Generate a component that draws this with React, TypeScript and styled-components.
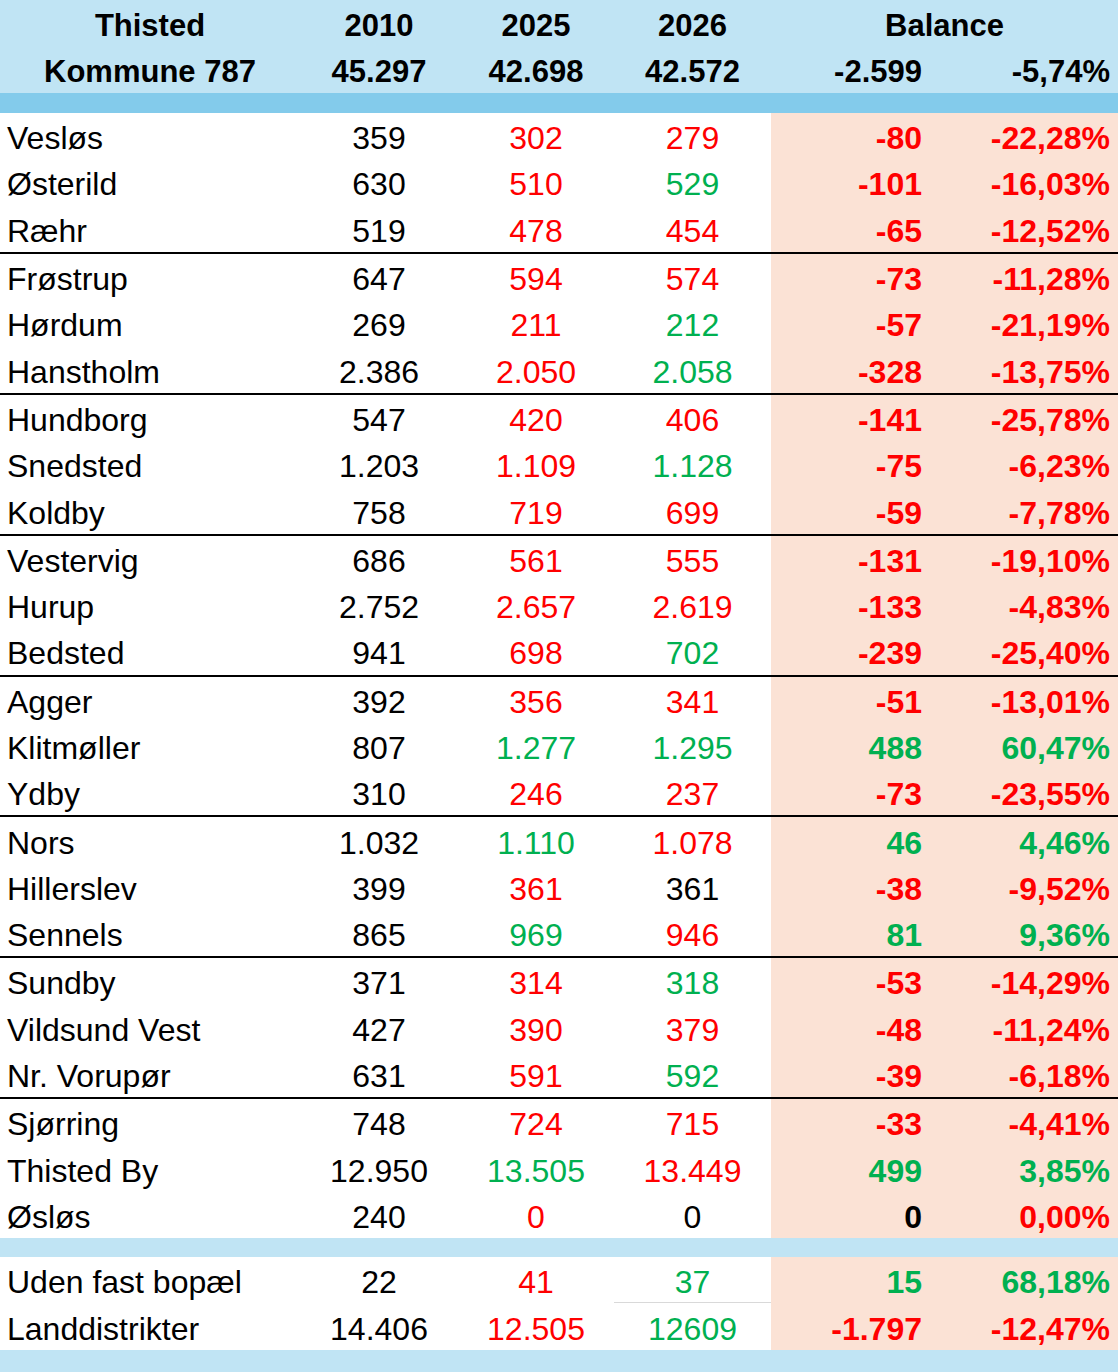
import styled, { createGlobalStyle } from 'styled-components'

type Tone = 'k' | 'r' | 'g'

interface Place {
  name: string
  y2010: string
  y2025: [string, Tone]
  y2026: [string, Tone]
  diff: [string, Tone]
  pct: [string, Tone]
}

const COLS = '300px 158px 156px 157px 159px 188px'

const tone = (t: Tone) => (t === 'r' ? '#ff0000' : t === 'g' ? '#00b050' : '#000000')

const p = (
  name: string,
  y2010: string,
  a: string,
  at: Tone,
  b: string,
  bt: Tone,
  d: string,
  dt: Tone,
  pc: string,
  pt: Tone
): Place => ({ name, y2010, y2025: [a, at], y2026: [b, bt], diff: [d, dt], pct: [pc, pt] })

const groups: Place[][] = [
  [
    p('Vesløs', '359', '302', 'r', '279', 'r', '-80', 'r', '-22,28%', 'r'),
    p('Østerild', '630', '510', 'r', '529', 'g', '-101', 'r', '-16,03%', 'r'),
    p('Ræhr', '519', '478', 'r', '454', 'r', '-65', 'r', '-12,52%', 'r'),
  ],
  [
    p('Frøstrup', '647', '594', 'r', '574', 'r', '-73', 'r', '-11,28%', 'r'),
    p('Hørdum', '269', '211', 'r', '212', 'g', '-57', 'r', '-21,19%', 'r'),
    p('Hanstholm', '2.386', '2.050', 'r', '2.058', 'g', '-328', 'r', '-13,75%', 'r'),
  ],
  [
    p('Hundborg', '547', '420', 'r', '406', 'r', '-141', 'r', '-25,78%', 'r'),
    p('Snedsted', '1.203', '1.109', 'r', '1.128', 'g', '-75', 'r', '-6,23%', 'r'),
    p('Koldby', '758', '719', 'r', '699', 'r', '-59', 'r', '-7,78%', 'r'),
  ],
  [
    p('Vestervig', '686', '561', 'r', '555', 'r', '-131', 'r', '-19,10%', 'r'),
    p('Hurup', '2.752', '2.657', 'r', '2.619', 'r', '-133', 'r', '-4,83%', 'r'),
    p('Bedsted', '941', '698', 'r', '702', 'g', '-239', 'r', '-25,40%', 'r'),
  ],
  [
    p('Agger', '392', '356', 'r', '341', 'r', '-51', 'r', '-13,01%', 'r'),
    p('Klitmøller', '807', '1.277', 'g', '1.295', 'g', '488', 'g', '60,47%', 'g'),
    p('Ydby', '310', '246', 'r', '237', 'r', '-73', 'r', '-23,55%', 'r'),
  ],
  [
    p('Nors', '1.032', '1.110', 'g', '1.078', 'r', '46', 'g', '4,46%', 'g'),
    p('Hillerslev', '399', '361', 'r', '361', 'k', '-38', 'r', '-9,52%', 'r'),
    p('Sennels', '865', '969', 'g', '946', 'r', '81', 'g', '9,36%', 'g'),
  ],
  [
    p('Sundby', '371', '314', 'r', '318', 'g', '-53', 'r', '-14,29%', 'r'),
    p('Vildsund Vest', '427', '390', 'r', '379', 'r', '-48', 'r', '-11,24%', 'r'),
    p('Nr. Vorupør', '631', '591', 'r', '592', 'g', '-39', 'r', '-6,18%', 'r'),
  ],
  [
    p('Sjørring', '748', '724', 'r', '715', 'r', '-33', 'r', '-4,41%', 'r'),
    p('Thisted By', '12.950', '13.505', 'g', '13.449', 'r', '499', 'g', '3,85%', 'g'),
    p('Øsløs', '240', '0', 'r', '0', 'k', '0', 'k', '0,00%', 'r'),
  ],
]

const totals: Place[] = [
  p('Uden fast bopæl', '22', '41', 'r', '37', 'g', '15', 'g', '68,18%', 'g'),
  p('Landdistrikter', '14.406', '12.505', 'r', '12609', 'g', '-1.797', 'r', '-12,47%', 'r'),
]

const GlobalStyle = createGlobalStyle`
  html, body {
    margin: 0;
    padding: 0;
    background: #ffffff;
  }
  body {
    font-family: "Liberation Sans", Arial, sans-serif;
  }
`

const Sheet = styled.div`
  width: 1118px;
  display: flex;
  flex-direction: column;
`

const HeadRow = styled.div`
  display: grid;
  grid-template-columns: ${COLS};
  height: 46.5px;
  background: #c0e4f4;
  font-size: 31px;
  font-weight: 700;
  color: #000;
`

const HeadCell = styled.div<{ $align?: 'center' | 'right'; $span?: number }>`
  display: flex;
  align-items: center;
  justify-content: ${props => (props.$align === 'right' ? 'flex-end' : 'center')};
  padding-top: 5px;
  padding-right: ${props => (props.$align === 'right' ? '8px' : '0')};
  grid-column: span ${props => props.$span ?? 1};
`

const Band = styled.div<{ $dark?: boolean; $h: number }>`
  height: ${props => props.$h}px;
  background: ${props => (props.$dark ? '#83cbeb' : '#c0e4f4')};
`

const Row = styled.div<{ $last?: boolean }>`
  display: grid;
  grid-template-columns: ${COLS};
  height: 46.3px;
  border-bottom: ${props => (props.$last ? '2px solid #000' : 'none')};
  font-size: 32px;
`

const NameCell = styled.div`
  display: flex;
  align-items: center;
  padding: 5px 0 0 7px;
  color: #000;
  white-space: nowrap;
`

const NumCell = styled.div<{ $tone: Tone; $rule?: boolean }>`
  display: flex;
  align-items: center;
  justify-content: center;
  padding-top: 5px;
  color: ${props => tone(props.$tone)};
  border-bottom: ${props => (props.$rule ? '1px solid #d9d9d9' : 'none')};
`

const BalanceCell = styled.div<{ $tone: Tone }>`
  display: flex;
  align-items: center;
  justify-content: flex-end;
  padding: 5px 8px 0 0;
  background: #fbe2d5;
  font-weight: 700;
  color: ${props => tone(props.$tone)};
`

const PlaceRow = ({ place, last, rule }: { place: Place; last?: boolean; rule?: boolean }) => (
  <Row $last={last}>
    <NameCell>{place.name}</NameCell>
    <NumCell $tone="k">{place.y2010}</NumCell>
    <NumCell $tone={place.y2025[1]}>{place.y2025[0]}</NumCell>
    <NumCell $tone={place.y2026[1]} $rule={rule}>
      {place.y2026[0]}
    </NumCell>
    <BalanceCell $tone={place.diff[1]}>{place.diff[0]}</BalanceCell>
    <BalanceCell $tone={place.pct[1]}>{place.pct[0]}</BalanceCell>
  </Row>
)

export default function App() {
  return (
    <>
      <GlobalStyle />
      <Sheet>
        <HeadRow>
          <HeadCell>Thisted</HeadCell>
          <HeadCell>2010</HeadCell>
          <HeadCell>2025</HeadCell>
          <HeadCell>2026</HeadCell>
          <HeadCell $span={2}>Balance</HeadCell>
        </HeadRow>
        <HeadRow>
          <HeadCell>Kommune 787</HeadCell>
          <HeadCell>45.297</HeadCell>
          <HeadCell>42.698</HeadCell>
          <HeadCell>42.572</HeadCell>
          <HeadCell $align="right">-2.599</HeadCell>
          <HeadCell $align="right">-5,74%</HeadCell>
        </HeadRow>
        <Band $dark $h={20} />
        {groups.map((group, gi) =>
          group.map((place, i) => (
            <PlaceRow
              key={place.name}
              place={place}
              last={i === group.length - 1 && gi < groups.length - 1}
            />
          ))
        )}
        <Band $h={19} />
        {totals.map((place, i) => (
          <PlaceRow key={place.name} place={place} rule={i === 0} />
        ))}
        <Band $h={22} />
      </Sheet>
    </>
  )
}
